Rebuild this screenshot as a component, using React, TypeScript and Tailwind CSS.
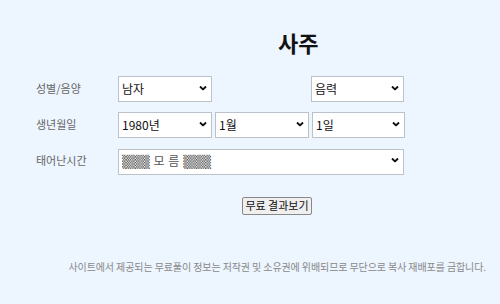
import { ReactNode } from 'react';

const Chevron = () => (
  <svg
    className="pointer-events-none absolute right-[5px] top-1/2 -translate-y-1/2"
    width="8"
    height="5"
    viewBox="0 0 8 5"
  >
    <path d="M1 1 L4 4 L7 1" fill="none" stroke="#111" strokeWidth="1.8" />
  </svg>
);

const Select = ({
  value,
  options,
  width,
  font = '',
}: {
  value: string;
  options?: string[];
  width: string;
  font?: string;
}) => (
  <div className={`relative h-[26px] ${width}`}>
    <select
      defaultValue={value}
      className={`h-full w-full appearance-none border border-[#bcc2c9] bg-white pl-[3px] pr-5 text-[12px] text-[#111] outline-none ${font}`}
    >
      {(options ?? [value]).map((o) => (
        <option key={o}>{o}</option>
      ))}
    </select>
    <Chevron />
  </div>
);

const Row = ({ label, children }: { label: string; children: ReactNode }) => (
  <div className="flex items-center">
    <span className="w-[82px] text-[11px] text-[#666]">{label}</span>
    {children}
  </div>
);

const App = () => {
  return (
    <div
      className="h-[304px] w-[500px] overflow-hidden bg-[#edf5ff]"
      style={{ fontFamily: '"Noto Sans CJK KR", "Noto Sans", sans-serif' }}
    >
      <h1 className="ml-[278px] pt-[27px] text-[22px] leading-[30px] font-bold text-[#111]">사주</h1>

      <div className="ml-[36px] mt-[18px] flex flex-col gap-[10px]">
        <Row label="성별/음양">
          <Select value="남자" options={['남자', '여자']} width="w-[94px]" />
          <div className="w-[99px]" />
          <Select value="음력" options={['음력', '양력']} width="w-[93px]" />
        </Row>

        <Row label="생년월일">
          <div className="flex gap-[3px]">
            <Select value="1980년" width="w-[94px]" />
            <Select value="1월" width="w-[94px]" />
            <Select value="1일" width="w-[93px]" />
          </div>
        </Row>

        <Row label="태어난시간">
          <Select
            value="▒▒▒ 모 름 ▒▒▒"
            width="w-[286px]"
            font="font-['DejaVu_Sans','Noto_Sans_CJK_KR',sans-serif] text-[#555]"
          />
        </Row>
      </div>

      <div className="ml-[242px] mt-[18px]">
        <button className="h-[18px] w-[70px] rounded-[2px] border border-[#888] bg-[#efefef] text-[11px] leading-none text-[#111]">
          무료 결과보기
        </button>
      </div>

      <p className="mt-[44px] pr-[14px] text-right text-[10px] tracking-[-0.1px] text-[#888]">
        사이트에서 제공되는 무료풀이 정보는 저작권 및 소유권에 위배되므로 무단으로 복사 재배포를 금합니다.
      </p>
    </div>
  );
};

export default App;
